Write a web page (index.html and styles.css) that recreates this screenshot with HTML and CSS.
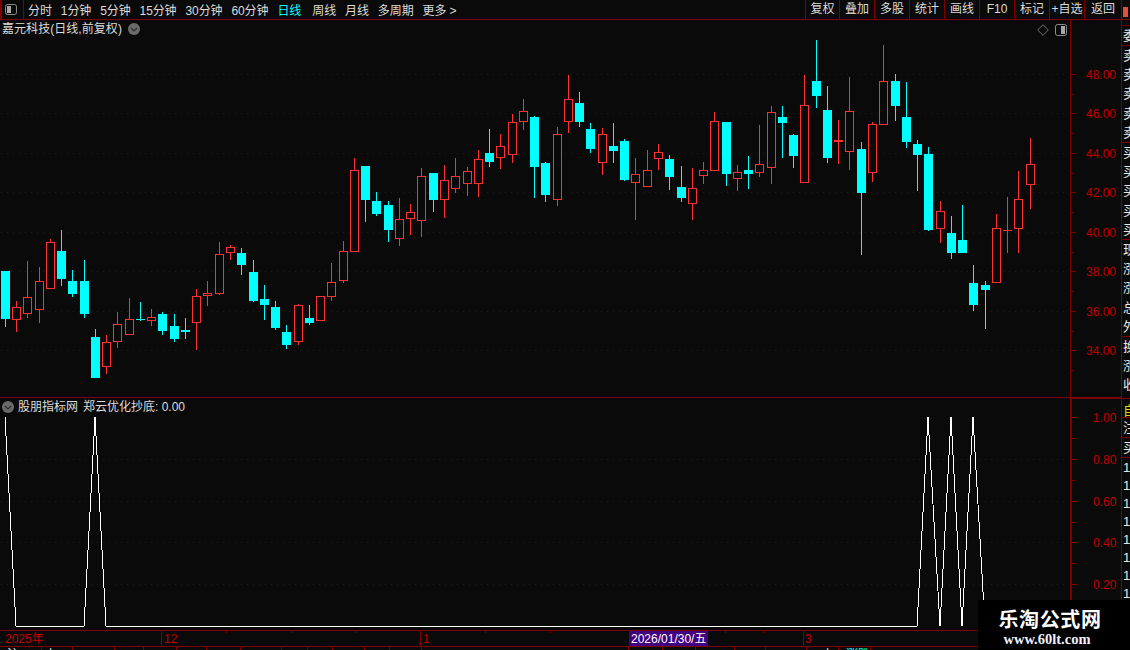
FILE: index.html
```html
<!DOCTYPE html>
<html lang="zh-CN">
<head>
<meta charset="utf-8">
<title>嘉元科技 日线</title>
<link rel="stylesheet" href="styles.css">
</head>
<body>
<div class="app">
  <div class="main">
    <header class="toolbar">
      <div class="tool-icon">
        <svg width="12" height="11" viewBox="0 0 12 11"><rect class="ic-frame" x="0.5" y="0.5" width="11" height="10" rx="2"/><rect class="ic-fill" x="2" y="2" width="4" height="7"/></svg>
      </div>
      <nav class="periods">
        <span>分时</span><span>1分钟</span><span>5分钟</span><span>15分钟</span><span>30分钟</span><span>60分钟</span>
        <span class="active">日线</span><span>周线</span><span>月线</span><span>多周期</span><span>更多 &gt;</span>
      </nav>
      <div class="tool-cells">
        <span class="tool-cell first">复权</span><span class="tool-cell">叠加</span><span class="tool-cell">多股</span><span class="tool-cell">统计</span><span class="tool-cell">画线</span><span class="tool-cell">F10</span><span class="tool-cell">标记</span><span class="tool-cell">+自选</span><span class="tool-cell last">返回</span>
      </div>
    </header>

    <section class="pane pane-price">
      <div class="pane-title title-price">
        <span>嘉元科技(日线,前复权)</span>
        <svg class="chev" width="12" height="12" viewBox="0 0 12 12"><circle class="chev-bg" cx="6" cy="6" r="6"/><path class="chev-mark" d="M3 5l3 3 3-3"/></svg>
      </div>
      <div class="pane-tools">
        <svg width="12" height="12" viewBox="0 0 12 12"><path class="diamond" d="M6 .7L11.3 6 6 11.3.7 6z"/></svg>
        <svg width="12" height="12" viewBox="0 0 12 12"><rect class="ic-frame" x="0.5" y="0.5" width="11" height="11" rx="2"/><rect class="ic-fill" x="6" y="2" width="4" height="8"/></svg>
      </div>
      <svg class="chart" width="1121" height="377" viewBox="0 20 1121 377">
        <path class="grid" d="M1 74.5H1068M1 113.5H1068M1 153.5H1068M1 192.5H1068M1 232.5H1068M1 271.5H1068M1 311.5H1068M1 350.5H1068"/>
        <g id="candles"></g>
        <path class="axis" d="M1070.5 20V397"/>
        <path class="axis" d="M1071 74.5h5M1071 113.5h5M1071 153.5h5M1071 192.5h5M1071 232.5h5M1071 271.5h5M1071 311.5h5M1071 350.5h5M1071 94.5h3M1071 133.5h3M1071 173.5h3M1071 212.5h3M1071 252.5h3M1071 291.5h3M1071 331.5h3M1071 370.5h3"/>
        <g class="axis-label">
          <text x="1086" y="79">48.00</text><text x="1086" y="118">46.00</text><text x="1086" y="158">44.00</text><text x="1086" y="197">42.00</text>
          <text x="1086" y="237">40.00</text><text x="1086" y="276">38.00</text><text x="1086" y="316">36.00</text><text x="1086" y="355">34.00</text>
        </g>
      </svg>
    </section>

    <section class="pane pane-indicator">
      <div class="pane-title title-indicator">
        <svg class="chev" width="12" height="12" viewBox="0 0 12 12"><circle class="chev-bg" cx="6" cy="6" r="6"/><path class="chev-mark" d="M3 5l3 3 3-3"/></svg>
        <span>股朋指标网</span>
        <span class="indicator-name">郑云优化抄底: 0.00</span>
      </div>
      <svg class="chart" width="1121" height="233" viewBox="0 397 1121 233">
        <path class="grid" d="M1 459.5H1068M1 501.5H1068M1 542.5H1068M1 584.5H1068"/>
        <polyline class="signal" points="5,417 16,626 84,626 95,417 106,626 917,626 928,417 940,626 951,417 962,626 973,417 985,626 1030,626"/>
        <path class="axis" d="M0 397.5H1070"/>
        <path class="axis thick" d="M1071 398V630"/>
        <path class="axis thick" d="M1070 398H1121"/>
        <path class="axis" d="M1072 417.5h5M1072 459.5h5M1072 501.5h5M1072 542.5h5M1072 584.5h5M1072 438.5h3M1072 480.5h3M1072 522.5h3M1072 563.5h3M1072 605.5h3"/>
        <g class="axis-label">
          <text x="1093" y="422">1.00</text><text x="1093" y="464">0.80</text><text x="1093" y="506">0.60</text><text x="1093" y="547">0.40</text><text x="1093" y="589">0.20</text>
        </g>
      </svg>
    </section>

    <div class="timeline">
      <svg class="chart" width="1121" height="17" viewBox="0 630 1121 17">
        <path class="axis" d="M0 630.5H1121M0 646.5H1121M161.5 630V646M420.5 630V646M803.5 630V646M226.5 631v2M291.5 631v2M355.5 631v2M485.5 631v2M550.5 631v2M725.5 631v2M764.5 631v2"/>
        <rect class="date-bg" x="629" y="631" width="79" height="15"/>
        <g class="time-label">
          <text x="5" y="643">2025年</text><text x="164" y="643">12</text><text x="423" y="643">1</text><text x="805" y="643">3</text>
        </g>
        <text class="date-label" x="631" y="643">2026/01/30/五</text>
      </svg>
    </div>

    <footer class="status">
      <span class="st w42">沪</span><span class="st w31 pl3">上</span><span class="st w42"></span><span class="st w29"></span><span class="st w33"></span><span class="st w30"></span><span class="st w34"></span><span class="st w41"></span><span class="st w26"></span><span class="st w25"></span><span class="st w32"></span><span class="st w25"></span><span class="st w32"></span><span class="st w207"></span><span class="st w34"></span><span class="st w33"></span><span class="st w39"></span><span class="st w31"></span><span class="st w41"></span><span class="st w32 pl15">上</span><span class="st w32 up">涨跌</span>
    </footer>
  </div>

  <aside class="side">
    <div class="s-row s-top"><i class="s-flag"></i></div>
    <div class="s-row s-gap"></div>
    <div class="s-row s-head">委</div>
    <div class="s-block"><span>卖</span><span>卖</span><span>卖</span><span>卖</span><span>卖</span></div>
    <div class="s-block"><span>买</span><span>买</span><span>买</span><span>买</span><span>买</span></div>
    <div class="s-block"><span>现</span><span>涨</span><span>涨</span><span>总</span><span>外</span></div>
    <div class="s-block s-three"><span>换</span><span>涨</span><span>收</span></div>
    <div class="s-row s-yellow">自</div>
    <div class="s-row s-sub">注</div>
    <div class="s-row s-sub">买</div>
    <div class="s-ticks"><span>14</span><span>14</span><span>14</span><span>14</span><span>14</span><span>14</span><span>14</span><span>14</span></div>
  </aside>

  <div class="watermark">
    <div class="wm-name">乐淘公式网</div>
    <div class="wm-url">www.60lt.com</div>
  </div>
</div>
<script src="script.js"></script>
</body>
</html>
```

FILE: styles.css
```css
* { box-sizing: border-box; }
html, body { margin: 0; padding: 0; background: #0a0a0a; }
body {
  width: 1130px;
  height: 650px;
  overflow: hidden;
  font-family: "Liberation Sans", "Noto Sans CJK SC", sans-serif;
  font-size: 12px;
  color: #dcdcdc;
}
.app { position: relative; display: flex; width: 1130px; height: 650px; }
.main { width: 1121px; display: flex; flex-direction: column; flex: none; }

.toolbar { display: flex; align-items: stretch; height: 20px; border-bottom: 1px solid #800000; flex: none; }
.tool-icon { width: 24px; border-left: 2px solid #800000; border-right: 1px solid #800000; display: flex; align-items: center; padding-left: 3px; }
.ic-frame { fill: none; stroke: #8c8c8c; stroke-width: 1; }
.ic-fill { fill: #a8a8a8; }
.periods { display: flex; align-items: center; gap: 9px; padding-left: 4px; white-space: nowrap; letter-spacing: -0.1px; }
.periods .active { color: #00ffff; margin-right: 2px; }
.tool-cells { display: flex; margin-left: auto; }
.tool-cell { width: 35px; border-left: 1px solid #800000; text-align: center; line-height: 18px; white-space: nowrap; }
.tool-cell.first { width: 34px; }
.tool-cell.last { width: 37px; }

.pane { position: relative; flex: none; }
.pane-price { height: 377px; }
.pane-indicator { height: 233px; border-top: 0; }
.chart { display: block; shape-rendering: crispEdges; }
.pane-title { position: absolute; display: flex; align-items: center; white-space: nowrap; line-height: 16px; }
.title-price { left: 2px; top: 1px; gap: 6px; }
.title-price span { letter-spacing: 0.05px; }
.title-indicator { left: 2px; top: 2px; gap: 4px; }
.indicator-name { margin-left: 1px; }
.chev { display: block; flex: none; }
.chev-bg { fill: #6b6b6b; }
.chev-mark { fill: none; stroke: #2c2c2c; stroke-width: 1.2; shape-rendering: auto; }
.pane-tools { position: absolute; left: 1037px; top: 4px; display: flex; gap: 6px; }
.diamond { fill: none; stroke: #6e6e6e; stroke-width: 1; }

.grid { fill: none; stroke: #5e0000; stroke-width: 1; stroke-dasharray: 1 5; }
.axis { fill: none; stroke: #800000; stroke-width: 1; }
.axis.thick { stroke-width: 2; }
.axis-label { font-size: 12px; fill: #c00000; }
.signal { fill: none; stroke: #ffffff; stroke-width: 1; }

.wick-up { fill: #ff3232; }
.wick-down { fill: #00ffff; }
.body-up { fill: #0a0a0a; stroke: #ff3232; stroke-width: 1; }
.solid-up { fill: #ff3232; }
.body-down { fill: #00ffff; }

.timeline { height: 17px; flex: none; }
.time-label { font-size: 12px; fill: #c00000; }
.date-bg { fill: #400080; }
.date-label { font-size: 12px; fill: #ffffff; }

.status { display: flex; height: 3px; overflow: hidden; flex: none; }
.st { border-right: 1px solid #800000; height: 3px; line-height: 17px; font-size: 12px; color: #ffffff; padding-left: 7px; flex: none; white-space: nowrap; overflow: hidden; }
.w42 { width: 42px; } .w31 { width: 31px; } .w29 { width: 29px; } .w33 { width: 33px; } .w30 { width: 30px; }
.w34 { width: 34px; } .w41 { width: 41px; } .w26 { width: 26px; } .w25 { width: 25px; } .w32 { width: 32px; }
.w39 { width: 39px; } .w207 { width: 207px; }
.st.pl3 { padding-left: 3px; }
.st.pl15 { padding-left: 15px; }
.st.up { color: #00ffff; }

.side { width: 9px; flex: none; height: 650px; border-left: 1px solid #800000; overflow: hidden; font-size: 13px; line-height: 19px; color: #e8e8e8; white-space: nowrap; }
.s-row { border-bottom: 1px solid #800000; overflow: hidden; padding-left: 1px; }
.s-top { height: 20px; padding: 7px 0 0 1px; }
.s-flag { display: block; width: 5px; height: 10px; background: #e2503c; }
.s-gap { height: 6px; }
.s-head { height: 20px; }
.s-block { height: 97px; border-bottom: 1px solid #800000; padding-left: 1px; overflow: hidden; display: flex; flex-direction: column; }
.s-block span { display: block; height: 19.2px; flex: none; }
.s-three { height: 62px; margin-bottom: 5px; }
.s-yellow { height: 14px; line-height: 13px; color: #d8d800; }
.s-sub { height: 20px; }
.s-ticks { display: flex; flex-direction: column; padding: 1px 0 0 1px; }
.s-ticks span { display: block; height: 18px; line-height: 18px; font-size: 13px; }

.watermark { position: absolute; left: 978px; top: 600px; width: 152px; height: 50px; background: #000000; color: #ffffff; text-align: center; padding-top: 7px; }
.wm-name { font-family: "Noto Sans CJK SC", sans-serif; font-weight: 700; font-size: 20px; line-height: 24px; letter-spacing: 0.6px; padding-right: 8px; }
.wm-url { font-family: "Liberation Serif", serif; font-weight: 700; font-size: 14.5px; line-height: 16px; color: #eef2ff; padding-right: 14px; }
```

FILE: script.js
```js
// Candles: [pixel column, 1 = rising / 0 = falling, high, top, bottom, low]
// y values are in thirds of a pixel, relative to each group's y0.
var groups = [
  { y0: 130, rows: [
    [5,0,423,423,567,590],[16,1,513,532,569,605],[27,1,393,502,553,563],[39,1,411,454,541,578],
    [50,1,327,337,478,478],[61,0,300,363,447,467],[72,0,420,453,492,500],[84,0,390,453,552,563],
    [95,0,597,621,744,744],[106,1,615,637,710,731],[117,1,546,583,635,653],[129,1,504,568,614,614],
    [140,0,516,567,571,573],[151,1,537,562,574,587],[162,0,546,552,603,614],[174,0,552,588,627,635],
    [185,0,564,600,606,626],[196,1,477,499,578,659],[207,1,453,490,497,527],[219,1,336,373,491,494],
    [230,1,345,352,368,389],[241,0,354,369,405,434],[253,0,390,426,513,516],[264,0,465,507,525,570],
    [275,0,513,531,594,599],[286,0,585,606,645,657]
  ]},
  { y0: 60, rows: [
    [298,1,733,736,846,855],[309,0,735,774,789,795],[320,1,709,709,783,783],[331,1,609,667,710,722],
    [343,1,543,574,662,668],[354,1,294,331,575,575],[365,0,318,318,420,486],[376,0,396,423,462,468],
    [388,0,423,435,510,546],[399,1,414,478,536,558],[410,1,432,457,476,525],[421,1,324,349,482,531],
    [433,0,339,339,420,456],[444,1,315,361,419,474],[455,1,294,349,386,399],[467,1,321,334,371,408],
    [478,1,270,298,371,411],[489,0,207,279,306,321],[500,1,222,259,293,327],[512,1,162,187,284,309],
    [523,1,117,154,185,210],[534,0,168,171,321,414],[545,0,306,309,405,426],[557,1,201,223,419,438],
    [568,1,45,118,185,219],[579,0,96,129,186,201],[590,0,189,207,267,279],[602,1,204,223,308,345],
    [613,0,189,258,273,309],[624,0,237,243,360,363],[635,1,294,343,368,480],[647,1,270,331,380,380],
    [658,1,252,277,296,330],[669,0,285,297,351,390],[681,0,318,381,414,426],[692,1,324,385,431,480],
    [703,1,306,331,347,372],[714,1,156,184,332,332],[726,0,186,186,342,378],[737,1,315,337,356,393],
    [748,0,288,330,342,387],[759,1,195,313,338,351],[771,1,138,157,323,372],[782,0,138,171,189,294],
    [793,0,222,225,288,324],[804,1,45,136,368,368]
  ]},
  { y0: 30, rows: [
    [816,0,30,153,198,234],[827,0,168,240,384,399],[838,1,270,330,336,402],[849,1,141,244,365,420],
    [861,0,336,357,489,675],[872,1,276,283,428,456],[883,1,45,154,284,284],[895,0,132,153,228,273],
    [906,0,156,261,336,354],[917,0,330,342,375,483],[928,0,351,372,600,603],[940,1,513,544,596,639],
    [951,0,558,609,669,687],[962,0,525,630,669,669],[973,0,705,759,825,843],[985,0,753,765,780,897],
    [996,1,552,595,758,758],[1007,1,501,600,603,669],[1018,1,423,508,596,669],[1030,1,324,403,464,537]
  ]}
];

var NS = "http://www.w3.org/2000/svg";
var layer = document.getElementById("candles");

function addRect(cls, x, y, w, h) {
  var r = document.createElementNS(NS, "rect");
  r.setAttribute("class", cls);
  r.setAttribute("x", x);
  r.setAttribute("y", y);
  r.setAttribute("width", w);
  r.setAttribute("height", h);
  layer.appendChild(r);
}

groups.forEach(function (group) {
  group.rows.forEach(function (c) {
    var col = c[0], up = c[1];
    var hi = group.y0 + Math.floor(c[2] / 3);
    var top = group.y0 + Math.floor(c[3] / 3);
    var bot = group.y0 + Math.round(c[4] / 3);
    var lo = group.y0 + Math.round(c[5] / 3);
    addRect(up ? "wick-up" : "wick-down", col, hi, 1, Math.max(lo - hi, 1));
    var h = Math.max(bot - top, 1);
    if (!up) {
      addRect("body-down", col - 4, top, 9, h);
    } else if (h <= 2) {
      addRect("solid-up", col - 4, top, 9, h);
    } else {
      addRect("body-up", col - 3.5, top + 0.5, 8, h - 1);
    }
  });
});
```
